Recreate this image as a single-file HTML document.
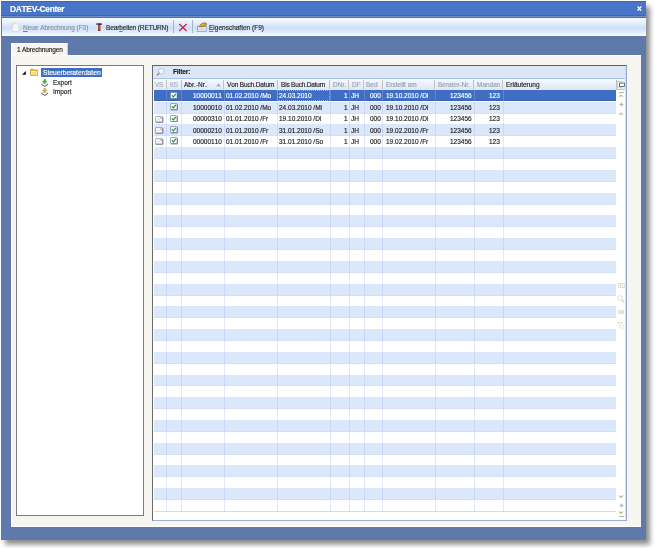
<!DOCTYPE html><html><head><meta charset="utf-8"><title>DATEV-Center</title><style>

html,body{margin:0;padding:0;background:#fff;}
body{width:655px;height:548px;overflow:hidden;position:relative;font-family:"Liberation Sans",sans-serif;font-size:6.5px;color:#1c1c1c;font-kerning:none;}
div,span,svg{position:absolute;box-sizing:border-box;white-space:nowrap;}
.t{line-height:8px;height:8px;will-change:transform;-webkit-text-stroke:.15px;}
.g{color:#96a0b0;}
u{text-decoration-thickness:.6px;text-decoration-color:rgba(40,40,40,.55);text-underline-offset:.6px;}
.win{left:1.3px;top:1.2px;width:645.1px;height:538.4px;background:#6079ab;box-shadow:4px 4.5px 5px rgba(0,0,0,.45);}
.title{left:1.3px;top:1.2px;width:645.1px;height:15.8px;background:#4975c9;border-top:1px solid #3d64b8;}
.tb{left:2.2px;top:18px;width:644.2px;height:18.3px;background:linear-gradient(#f7fcff 0%,#e3eefd 28%,#cfdefa 55%,#e6f2fe 85%,#f6ffff 100%);}
.page{left:10.6px;top:55px;width:630.4px;height:471.8px;background:#f7f5f0;border-left:1px solid #fff;border-top:1px solid #fdfdfb;border-bottom:1px solid #fff;}
.tab{left:10.6px;top:43px;width:57.3px;height:13px;background:#f6f5f0;border-left:1px solid #fff;border-top:1px solid #fff;border-right:1px solid #c3cfe4;}
.tree{left:15.8px;top:64.8px;width:128.5px;height:451px;background:#fff;border:1px solid #7c7c7c;}
.grid{left:152px;top:65px;width:474.9px;height:455.5px;background:#fff;border:1px solid #6a6a6a;border-top-color:#626264;border-right-color:#93a9d2;border-bottom-color:#9fb2d6;}
.filt{left:153px;top:66px;width:472.9px;height:12.3px;background:#dce6f7;}
.hdr{left:153px;top:79px;width:472.9px;height:10.8px;background:linear-gradient(#f6f9fe,#e9f0fb 50%,#dde7f6);}
.hs{top:80px;width:1px;height:9px;background:#c6c3b9;}
.vl{top:90px;width:1px;height:421.5px;background:rgba(165,183,235,.32);}
.r{left:154px;width:462px;}

</style></head><body>
<div class="win"></div><div class="title"></div>
<div style="left:1.3px;top:15px;width:645.1px;height:1px;background:#3f65b0"></div>
<div style="left:1.3px;top:16px;width:645.1px;height:1px;background:#6f90cd"></div>
<div style="left:1.3px;top:17px;width:645.1px;height:1px;background:#566f9d"></div>
<span class="t" style="left:10px;top:4.3px;font-size:8.4px;letter-spacing:-.28px;line-height:10px;height:10px;font-weight:bold;color:#fff">DATEV-Center</span>
<svg style="left:637.3px;top:5.9px" width="4.8" height="5.2" viewBox="0 0 4.8 5.2"><path d="M0.6 0.5 L4.2 4.7 M4.2 0.5 L0.6 4.7" stroke="#fff" stroke-width="1.25"/></svg>
<div class="tb"></div>
<svg style="left:11px;top:22px" width="9" height="10" viewBox="0 0 9 10"><path d="M1.3 1.4 H5.8 L8 3.6 V9.6 H1.3 Z" fill="#f6f6fa" stroke="#d6d8e2" stroke-width="0.8"/><circle cx="2" cy="2.5" r="1.5" fill="#f5dcb4" opacity=".85"/></svg>
<span class="t" style="left:22.5px;top:23.5px;color:#8e939c;letter-spacing:-.04px"><u>N</u>eue Abrechnung (F3)</span>
<svg style="left:96.1px;top:23.3px" width="6.4" height="8" viewBox="0 0 6.4 8"><rect x="0.3" y="0.2" width="5.5" height="1.9" rx=".5" fill="#3a3a3c"/><rect x="0.3" y="0.4" width="1.5" height="1.5" rx=".4" fill="#8a8d92"/><rect x="2" y="1.9" width="2.3" height="5.8" rx=".6" fill="#dc5a26"/><rect x="2" y="1.9" width=".7" height="5.8" fill="#a8441c"/><rect x="3.7" y="1.9" width=".6" height="5.8" fill="#9a3616"/><rect x="2" y="7" width="2.3" height=".7" fill="#4a2010"/></svg>
<span class="t" style="left:105.9px;top:23.5px;color:#2a2a2a;letter-spacing:-.13px">Bear<u>b</u>eiten (RETURN)</span>
<div style="left:173px;top:20px;width:1px;height:13px;background:#acb5c6"></div>
<svg style="left:178px;top:22.7px" width="10" height="9" viewBox="0 0 10 9"><path d="M1.2 1 L8.6 8 M8.6 1 L1.2 8" stroke="#c8203a" stroke-width="1.2"/></svg>
<div style="left:192.4px;top:20px;width:1px;height:13px;background:#acb5c6"></div>
<svg style="left:197px;top:22.2px" width="10" height="10" viewBox="0 0 10 10"><rect x="0.5" y="4.3" width="8.7" height="5" fill="#f3f6fc" stroke="#8093c6" stroke-width=".8"/><path d="M1.5 6.3H8.2M1.5 7.7H8.2" stroke="#b9c6e6" stroke-width=".7"/><path d="M2.2 4.9 C2.8 2.6 5.4 0.7 8 0.7 C9.7 0.9 9.9 2.3 8.9 3.5 C7.6 4.6 4.6 5.1 2.2 4.9Z" fill="#e2a31f" stroke="#6a4a10" stroke-width=".5"/></svg>
<span class="t" style="left:209px;top:23.5px;color:#2a2a2a"><u>E</u>igenschaften (F9)</span>
<div class="tab"></div><div class="page"></div>
<span class="t" style="left:16.7px;top:45.7px;letter-spacing:-.15px">1 Abrechnungen</span>
<div class="tree"></div>
<svg style="left:22.4px;top:71.3px" width="4.2" height="4.2" viewBox="0 0 4 4"><path d="M3.7 0 V3.7 H0 Z" fill="#111"/></svg>
<svg style="left:30px;top:68.1px" width="8.4" height="8" viewBox="0 0 8.4 8"><path d="M0.5 1.2 H3.2 L3.9 2 H7.8 V7.4 H0.5 Z" fill="#e6bd3a" stroke="#b48c22" stroke-width=".6"/><path d="M0.9 3 H7.5 V7 H0.9 Z" fill="#f7dc78"/><path d="M2 3.6 H5.6 L6.6 4.6" stroke="#fff6cc" stroke-width=".8" fill="none"/></svg>
<div style="left:41.2px;top:68.3px;width:60.6px;height:8.9px;background:#3e6dc3"></div>
<span class="t" style="left:42.6px;top:68.8px;color:#fff;font-size:6.7px">Steuerberaterdaten</span>
<svg style="left:40.8px;top:78.6px" width="7.5" height="8.2" viewBox="0 0 8 8.5"><path d="M0.5 5.4 L4 7.6 L7.5 5.4 L4 3.6 Z" fill="#f4f5f7" stroke="#9aa0ac" stroke-width=".5"/><path d="M0.5 5.6 L4 7.9 L7.5 5.6" fill="none" stroke="#4e545e" stroke-width=".9"/><path d="M3 0.4 H5 V2.4 H6.3 L4 5 L1.7 2.4 H3 Z" fill="#37c437" stroke="#1d8a22" stroke-width=".4"/></svg>
<span class="t" style="left:52.9px;top:78.6px;">Export</span>
<svg style="left:40.8px;top:88.0px" width="7.5" height="8.2" viewBox="0 0 8 8.5"><path d="M0.5 5.4 L4 7.6 L7.5 5.4 L4 3.6 Z" fill="#f4f5f7" stroke="#9aa0ac" stroke-width=".5"/><path d="M0.5 5.6 L4 7.9 L7.5 5.6" fill="none" stroke="#4e545e" stroke-width=".9"/><path d="M3 0.4 H5 V2.4 H6.3 L4 5 L1.7 2.4 H3 Z" fill="#f1a735" stroke="#b9741a" stroke-width=".4"/></svg>
<span class="t" style="left:52.9px;top:88.1px;">Import</span>
<div class="grid"></div><div class="filt"></div>
<div style="left:153px;top:78.2px;width:472.9px;height:1px;background:#a9c1e8"></div>
<div class="hdr"></div>
<svg style="left:156.4px;top:67.8px" width="9" height="8.5" viewBox="0 0 9 8.5"><circle cx="5.3" cy="3.3" r="2.8" fill="#f4fbff" stroke="#a6b6cc" stroke-width=".8"/><path d="M3.1 5.3 L1.3 7.1" stroke="#bf8450" stroke-width="1.4" stroke-linecap="round"/></svg>
<span class="t" style="left:173.2px;top:68.3px;font-weight:bold;letter-spacing:-.1px;color:#222">Filter:</span>
<div class="r" style="top:90.45px;height:10.62px;background:#3f6ec4;border-bottom:1px solid #3a62b4"></div>
<div class="r" style="top:101.62px;height:11.97px;background:#dbe7fb;border-bottom:1px solid #d6dff7"></div>
<div class="r" style="top:124.36px;height:11.97px;background:#dbe7fb;border-bottom:1px solid #d6dff7"></div>
<div class="r" style="top:147.10px;height:11.97px;background:#dbe7fb;border-bottom:1px solid #d6dff7"></div>
<div class="r" style="top:169.84px;height:11.97px;background:#dbe7fb;border-bottom:1px solid #d6dff7"></div>
<div class="r" style="top:192.58px;height:11.97px;background:#dbe7fb;border-bottom:1px solid #d6dff7"></div>
<div class="r" style="top:215.32px;height:11.97px;background:#dbe7fb;border-bottom:1px solid #d6dff7"></div>
<div class="r" style="top:238.06px;height:11.97px;background:#dbe7fb;border-bottom:1px solid #d6dff7"></div>
<div class="r" style="top:260.80px;height:11.97px;background:#dbe7fb;border-bottom:1px solid #d6dff7"></div>
<div class="r" style="top:283.54px;height:11.97px;background:#dbe7fb;border-bottom:1px solid #d6dff7"></div>
<div class="r" style="top:306.28px;height:11.97px;background:#dbe7fb;border-bottom:1px solid #d6dff7"></div>
<div class="r" style="top:329.02px;height:11.97px;background:#dbe7fb;border-bottom:1px solid #d6dff7"></div>
<div class="r" style="top:351.76px;height:11.97px;background:#dbe7fb;border-bottom:1px solid #d6dff7"></div>
<div class="r" style="top:374.50px;height:11.97px;background:#dbe7fb;border-bottom:1px solid #d6dff7"></div>
<div class="r" style="top:397.24px;height:11.97px;background:#dbe7fb;border-bottom:1px solid #d6dff7"></div>
<div class="r" style="top:419.98px;height:11.97px;background:#dbe7fb;border-bottom:1px solid #d6dff7"></div>
<div class="r" style="top:442.72px;height:11.97px;background:#dbe7fb;border-bottom:1px solid #d6dff7"></div>
<div class="r" style="top:465.46px;height:11.97px;background:#dbe7fb;border-bottom:1px solid #d6dff7"></div>
<div class="r" style="top:488.20px;height:11.97px;background:#dbe7fb;border-bottom:1px solid #d6dff7"></div>
<div class="r" style="top:510.84px;height:1px;background:#cfdcf3"></div>
<div class="vl" style="left:166.4px"></div>
<div class="vl" style="left:181.0px"></div>
<div class="vl" style="left:223.8px"></div>
<div class="vl" style="left:277.0px"></div>
<div class="vl" style="left:329.8px"></div>
<div class="vl" style="left:348.8px"></div>
<div class="vl" style="left:363.5px"></div>
<div class="vl" style="left:382.3px"></div>
<div class="vl" style="left:434.8px"></div>
<div class="vl" style="left:473.7px"></div>
<div class="vl" style="left:502.6px"></div>
<div class="hs" style="left:165.9px"></div>
<div class="hs" style="left:180.5px"></div>
<div class="hs" style="left:223.3px"></div>
<div class="hs" style="left:276.5px"></div>
<div class="hs" style="left:329.3px"></div>
<div class="hs" style="left:348.3px"></div>
<div class="hs" style="left:363.0px"></div>
<div class="hs" style="left:381.8px"></div>
<div class="hs" style="left:434.3px"></div>
<div class="hs" style="left:473.2px"></div>
<div class="hs" style="left:502.1px"></div>
<div class="hs" style="left:615.8px"></div>
<div style="left:277.4px;top:90.2px;width:52.6px;height:11.2px;border:1px dotted rgba(235,240,255,.5)"></div>
<span class="t g" style="left:154.6px;top:81.4px;color:#a9b1be;letter-spacing:-.3px">VS</span>
<span class="t g" style="left:169.6px;top:81.4px;color:#a9b1be;letter-spacing:-.5px">KS</span>
<span class="t" style="left:184.3px;top:81.4px;">Abr.-Nr.</span>
<svg style="left:215.7px;top:83.4px" width="5" height="3.6" viewBox="0 0 5 3.6"><path d="M2.5 0.2 L4.8 3.4 H0.2 Z" fill="#a3ada6"/></svg>
<span class="t" style="left:227.3px;top:81.4px;letter-spacing:-.14px">Von Buch.Datum</span>
<span class="t" style="left:280.5px;top:81.4px;letter-spacing:-.19px">Bis Buch.Datum</span>
<span class="t g" style="left:332.7px;top:81.4px;">DNr.</span>
<span class="t g" style="left:351.8px;top:81.4px;">DF</span>
<span class="t g" style="left:366.4px;top:81.4px;">Bed</span>
<span class="t g" style="left:385.5px;top:81.4px;">Erstellt am</span>
<span class="t g" style="left:438px;top:81.4px;">Berater-Nr.</span>
<span class="t g" style="left:477.3px;top:81.4px;">Mandan</span>
<span class="t" style="left:505.8px;top:81.4px;">Erläuterung</span>
<svg style="left:616.6px;top:81.2px" width="8" height="6.8" viewBox="0 0 8.4 6.8"><rect x="0.4" y="0.4" width="4.6" height="5.8" fill="#fbfcfe" stroke="#a9b2a4" stroke-width=".6"/><rect x="2.6" y="2" width="5.2" height="3.6" fill="#fff" stroke="#565e58" stroke-width=".9"/></svg>
<div style="left:616.3px;top:88.9px;width:9.8px;height:1px;background:#bcc7da"></div>
<div style="left:625px;top:66px;width:1.2px;height:453px;background:#d3ddf1"></div>
<svg style="left:169.9px;top:91.90px" width="8" height="7.7" viewBox="0 0 8 7.7"><rect x="0.5" y="0.5" width="6.6" height="6" rx=".6" fill="#f2fafd" stroke="#7f8fb0" stroke-width=".8"/><path d="M0.9 7 H7.5 V1.2" stroke="#5d6780" stroke-width=".7" fill="none"/><path d="M1.9 3.4 L3.3 4.9 L5.9 1.9" stroke="#1b8a2c" stroke-width="1.05" fill="none"/></svg>
<span class="t" style="right:432.8px;top:92.4px;color:#fff;">10000011</span>
<span class="t" style="left:225.8px;top:92.4px;color:#fff;">01.02.2010 /Mo</span>
<span class="t" style="left:279.0px;top:92.4px;color:#fff;">24.03.2010</span>
<span class="t" style="right:307.8px;top:92.4px;color:#fff;">1</span>
<span class="t" style="left:351.3px;top:92.4px;color:#fff;">JH</span>
<span class="t" style="right:274.6px;top:92.4px;color:#fff;">000</span>
<span class="t" style="left:385.5px;top:92.4px;color:#fff;">19.10.2010 /Di</span>
<span class="t" style="right:183.3px;top:92.4px;color:#fff;">123456</span>
<span class="t" style="right:154.7px;top:92.4px;color:#fff;">123</span>
<svg style="left:169.9px;top:103.27px" width="8" height="7.7" viewBox="0 0 8 7.7"><rect x="0.5" y="0.5" width="6.6" height="6" rx=".6" fill="#f2fafd" stroke="#7f8fb0" stroke-width=".8"/><path d="M0.9 7 H7.5 V1.2" stroke="#5d6780" stroke-width=".7" fill="none"/><path d="M1.9 3.4 L3.3 4.9 L5.9 1.9" stroke="#1b8a2c" stroke-width="1.05" fill="none"/></svg>
<span class="t" style="right:432.8px;top:103.77000000000001px;">10000010</span>
<span class="t" style="left:225.8px;top:103.77000000000001px;">01.02.2010 /Mo</span>
<span class="t" style="left:279.0px;top:103.77000000000001px;">24.03.2010 /Mi</span>
<span class="t" style="right:307.8px;top:103.77000000000001px;">1</span>
<span class="t" style="left:351.3px;top:103.77000000000001px;">JH</span>
<span class="t" style="right:274.6px;top:103.77000000000001px;">000</span>
<span class="t" style="left:385.5px;top:103.77000000000001px;">19.10.2010 /Di</span>
<span class="t" style="right:183.3px;top:103.77000000000001px;">123456</span>
<span class="t" style="right:154.7px;top:103.77000000000001px;">123</span>
<svg style="left:155.3px;top:115.69px" width="8.5" height="7" viewBox="0 0 9 7.2"><rect x="0.5" y="0.5" width="7.6" height="5.8" rx=".6" fill="#f7f8fc" stroke="#8a93ae" stroke-width=".8"/><path d="M0.7 6.6 H8.4 V1.2" stroke="#5f6678" stroke-width=".7" fill="none"/><path d="M2.2 3.4 H5.4" stroke="#c4c8d4" stroke-width=".6"/><rect x="5.8" y="1.5" width="1.2" height="1.2" fill="#b0484a"/></svg>
<svg style="left:169.9px;top:114.64px" width="8" height="7.7" viewBox="0 0 8 7.7"><rect x="0.5" y="0.5" width="6.6" height="6" rx=".6" fill="#f2fafd" stroke="#7f8fb0" stroke-width=".8"/><path d="M0.9 7 H7.5 V1.2" stroke="#5d6780" stroke-width=".7" fill="none"/><path d="M1.9 3.4 L3.3 4.9 L5.9 1.9" stroke="#1b8a2c" stroke-width="1.05" fill="none"/></svg>
<span class="t" style="right:432.8px;top:115.14px;">00000310</span>
<span class="t" style="left:225.8px;top:115.14px;">01.01.2010 /Fr</span>
<span class="t" style="left:279.0px;top:115.14px;">19.10.2010 /Di</span>
<span class="t" style="right:307.8px;top:115.14px;">1</span>
<span class="t" style="left:351.3px;top:115.14px;">JH</span>
<span class="t" style="right:274.6px;top:115.14px;">000</span>
<span class="t" style="left:385.5px;top:115.14px;">19.10.2010 /Di</span>
<span class="t" style="right:183.3px;top:115.14px;">123456</span>
<span class="t" style="right:154.7px;top:115.14px;">123</span>
<svg style="left:155.3px;top:127.06px" width="8.5" height="7" viewBox="0 0 9 7.2"><rect x="0.5" y="0.5" width="7.6" height="5.8" rx=".6" fill="#f7f8fc" stroke="#8a93ae" stroke-width=".8"/><path d="M0.7 6.6 H8.4 V1.2" stroke="#5f6678" stroke-width=".7" fill="none"/><path d="M2.2 3.4 H5.4" stroke="#c4c8d4" stroke-width=".6"/><rect x="5.8" y="1.5" width="1.2" height="1.2" fill="#b0484a"/></svg>
<svg style="left:169.9px;top:126.01px" width="8" height="7.7" viewBox="0 0 8 7.7"><rect x="0.5" y="0.5" width="6.6" height="6" rx=".6" fill="#f2fafd" stroke="#7f8fb0" stroke-width=".8"/><path d="M0.9 7 H7.5 V1.2" stroke="#5d6780" stroke-width=".7" fill="none"/><path d="M1.9 3.4 L3.3 4.9 L5.9 1.9" stroke="#1b8a2c" stroke-width="1.05" fill="none"/></svg>
<span class="t" style="right:432.8px;top:126.51px;">00000210</span>
<span class="t" style="left:225.8px;top:126.51px;">01.01.2010 /Fr</span>
<span class="t" style="left:279.0px;top:126.51px;">31.01.2010 /So</span>
<span class="t" style="right:307.8px;top:126.51px;">1</span>
<span class="t" style="left:351.3px;top:126.51px;">JH</span>
<span class="t" style="right:274.6px;top:126.51px;">000</span>
<span class="t" style="left:385.5px;top:126.51px;">19.02.2010 /Fr</span>
<span class="t" style="right:183.3px;top:126.51px;">123456</span>
<span class="t" style="right:154.7px;top:126.51px;">123</span>
<svg style="left:155.3px;top:138.43px" width="8.5" height="7" viewBox="0 0 9 7.2"><rect x="0.5" y="0.5" width="7.6" height="5.8" rx=".6" fill="#f7f8fc" stroke="#8a93ae" stroke-width=".8"/><path d="M0.7 6.6 H8.4 V1.2" stroke="#5f6678" stroke-width=".7" fill="none"/><path d="M2.2 3.4 H5.4" stroke="#c4c8d4" stroke-width=".6"/><rect x="5.8" y="1.5" width="1.2" height="1.2" fill="#b0484a"/></svg>
<svg style="left:169.9px;top:137.38px" width="8" height="7.7" viewBox="0 0 8 7.7"><rect x="0.5" y="0.5" width="6.6" height="6" rx=".6" fill="#f2fafd" stroke="#7f8fb0" stroke-width=".8"/><path d="M0.9 7 H7.5 V1.2" stroke="#5d6780" stroke-width=".7" fill="none"/><path d="M1.9 3.4 L3.3 4.9 L5.9 1.9" stroke="#1b8a2c" stroke-width="1.05" fill="none"/></svg>
<span class="t" style="right:432.8px;top:137.88px;">00000110</span>
<span class="t" style="left:225.8px;top:137.88px;">01.01.2010 /Fr</span>
<span class="t" style="left:279.0px;top:137.88px;">31.01.2010 /So</span>
<span class="t" style="right:307.8px;top:137.88px;">1</span>
<span class="t" style="left:351.3px;top:137.88px;">JH</span>
<span class="t" style="right:274.6px;top:137.88px;">000</span>
<span class="t" style="left:385.5px;top:137.88px;">19.02.2010 /Fr</span>
<span class="t" style="right:183.3px;top:137.88px;">123456</span>
<span class="t" style="right:154.7px;top:137.88px;">123</span>
<div style="left:618.6px;top:92.3px;width:5.6px;height:1px;background:#b2ba98"></div>
<svg style="left:618.4px;top:94px" width="6" height="3.4" viewBox="0 0 6 3.4"><path d="M3 0.2 L5.8 3.2 L3 2.3 L0.2 3.2 Z" fill="#b2ba98"/></svg>
<svg style="left:618.9px;top:101.5px" width="5" height="5" viewBox="0 0 5 5"><path d="M2.5 0.1 L3.3 1.7 L4.9 2.5 L3.3 3.3 L2.5 4.9 L1.7 3.3 L0.1 2.5 L1.7 1.7 Z" fill="#b2ba98"/></svg>
<svg style="left:618.4px;top:111.8px" width="6" height="3.4" viewBox="0 0 6 3.4"><path d="M3 0.2 L5.8 3.2 L3 2.3 L0.2 3.2 Z" fill="#b2ba98"/></svg>
<svg style="left:618.4px;top:494.8px" width="6" height="3.4" viewBox="0 0 6 3.4"><path d="M3 3.2 L5.8 0.2 L3 1.1 L0.2 0.2 Z" fill="#b2ba98"/></svg>
<svg style="left:618.9px;top:503px" width="5" height="5" viewBox="0 0 5 5"><path d="M2.5 0.1 L3.3 1.7 L4.9 2.5 L3.3 3.3 L2.5 4.9 L1.7 3.3 L0.1 2.5 L1.7 1.7 Z" fill="#b2ba98"/></svg>
<svg style="left:618.4px;top:511.4px" width="6" height="3.4" viewBox="0 0 6 3.4"><path d="M3 3.2 L5.8 0.2 L3 1.1 L0.2 0.2 Z" fill="#b2ba98"/></svg>
<div style="left:618.6px;top:515.6px;width:5.6px;height:1px;background:#b2ba98"></div>
<svg style="left:617.6px;top:282.6px" width="7" height="5" viewBox="0 0 7 5"><rect x="0.4" y="0.4" width="2.2" height="4.2" fill="none" stroke="#d6dac9" stroke-width=".8"/><rect x="4" y="0.4" width="2.2" height="4.2" fill="none" stroke="#d6dac9" stroke-width=".8"/></svg>
<svg style="left:617.2px;top:294.6px" width="8" height="8" viewBox="0 0 8 8"><circle cx="3" cy="3" r="2.4" fill="none" stroke="#d6dac9" stroke-width=".8"/><path d="M4.8 4.8 L7.4 7.4" stroke="#c4c9b4" stroke-width="1.1"/></svg>
<span class="t" style="left:617.6px;top:308.2px;color:#d6dac9;font-size:5.6px;font-weight:bold">IM</span>
<svg style="left:617.4px;top:321.6px" width="8" height="7" viewBox="0 0 8 7"><path d="M0.4 0.5 H5.6 L3 3.6 Z" fill="none" stroke="#d6dac9" stroke-width=".8"/><path d="M3 3.6 V6.4" stroke="#d6dac9" stroke-width=".8"/><path d="M5.4 3.4 H7.4 M5.4 5 H7.4 M5.4 6.4 H7.4" stroke="#d6dac9" stroke-width=".6"/></svg>
</body></html>
